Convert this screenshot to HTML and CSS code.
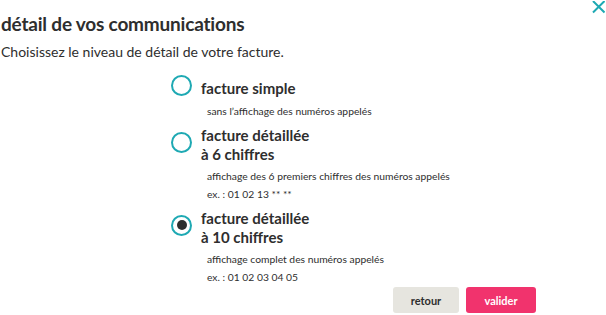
FILE: index.html
```html
<!DOCTYPE html>
<html lang="fr">
<head>
<meta charset="utf-8">
<title>détail de vos communications</title>
<link rel="stylesheet" href="styles.css">
</head>
<body>
<div class="modal">
  <button class="close" aria-label="fermer">
    <svg width="13" height="13" viewBox="0 0 13 13"><path d="M1 0 L12.5 11.5 M12.5 0 L1 11.5" stroke="#1ea9b3" stroke-width="2" fill="none"/></svg>
  </button>
  <h1 class="title">détail de vos communications</h1>
  <p class="intro">Choisissez le niveau de détail de votre facture.</p>
  <div class="options">
    <div class="option">
      <div class="option-head">
        <span class="radio"></span>
        <span class="label">facture simple</span>
      </div>
      <p class="sub">sans l’affichage des numéros appelés</p>
    </div>
    <div class="option">
      <div class="option-head">
        <span class="radio"></span>
        <span class="label">facture détaillée<br>à 6 chiffres</span>
      </div>
      <p class="sub">affichage des 6 premiers chiffres des numéros appelés</p>
      <p class="sub">ex. : 01 02 13 ** **</p>
    </div>
    <div class="option">
      <div class="option-head">
        <span class="radio checked"></span>
        <span class="label">facture détaillée<br>à 10 chiffres</span>
      </div>
      <p class="sub">affichage complet des numéros appelés</p>
      <p class="sub">ex. : 01 02 03 04 05</p>
    </div>
  </div>
  <div class="actions">
    <button class="btn btn-back">retour</button>
    <button class="btn btn-ok">valider</button>
  </div>
</div>
</body>
</html>
```
FILE: styles.css
```css
html, body {
  margin: 0;
  padding: 0;
  background: #ffffff;
}
body {
  font-family: "Lato", "Liberation Sans", sans-serif;
  color: #2e2e2e;
  width: 606px;
  height: 315px;
  overflow: hidden;
}
.modal {
  position: relative;
  padding: 0 0 0 1px;
}
.close {
  position: absolute;
  top: 1px;
  right: 1px;
  width: 13px;
  height: 13px;
  padding: 0;
  border: 0;
  background: none;
  display: block;
}
.close svg {
  display: block;
}
.title {
  margin: 0;
  padding-top: 12px;
  font-size: 19px;
  line-height: 24px;
  font-weight: 700;
  letter-spacing: -0.2px;
}
.intro {
  margin: 6px 0 0 0;
  font-size: 14px;
  line-height: 20px;
}
.options {
  display: flex;
  flex-direction: column;
  gap: 6px;
  margin-top: 16px;
  padding-left: 170px;
}
.option-head {
  display: flex;
  align-items: center;
}
.radio {
  box-sizing: border-box;
  width: 21px;
  height: 21px;
  border: 2px solid #1ea9b3;
  border-radius: 50%;
  margin: -3px 9px 3px 0;
  display: flex;
  align-items: center;
  justify-content: center;
  flex: none;
}
.radio.checked::after {
  content: "";
  width: 10px;
  height: 10px;
  border-radius: 50%;
  background: #2e2e2e;
}
.label {
  font-size: 15px;
  line-height: 19px;
  font-weight: 700;
}
.sub {
  margin: 4px 0 0 36px;
  font-size: 10.3px;
  line-height: 17px;
}
.sub + .sub {
  margin-top: 1px;
}
.actions {
  display: flex;
  justify-content: flex-end;
  gap: 7px;
  margin-top: 1px;
  padding-right: 70px;
}
.btn {
  height: 26px;
  border: 0;
  border-radius: 3px;
  font-family: "Lato", "Liberation Sans", sans-serif;
  font-weight: 700;
  font-size: 11px;
  padding: 0;
}
.btn-back {
  width: 66px;
  background: #e6e5df;
  color: #2e2e2e;
}
.btn-ok {
  width: 70px;
  background: #f1336d;
  color: #ffffff;
}
```
